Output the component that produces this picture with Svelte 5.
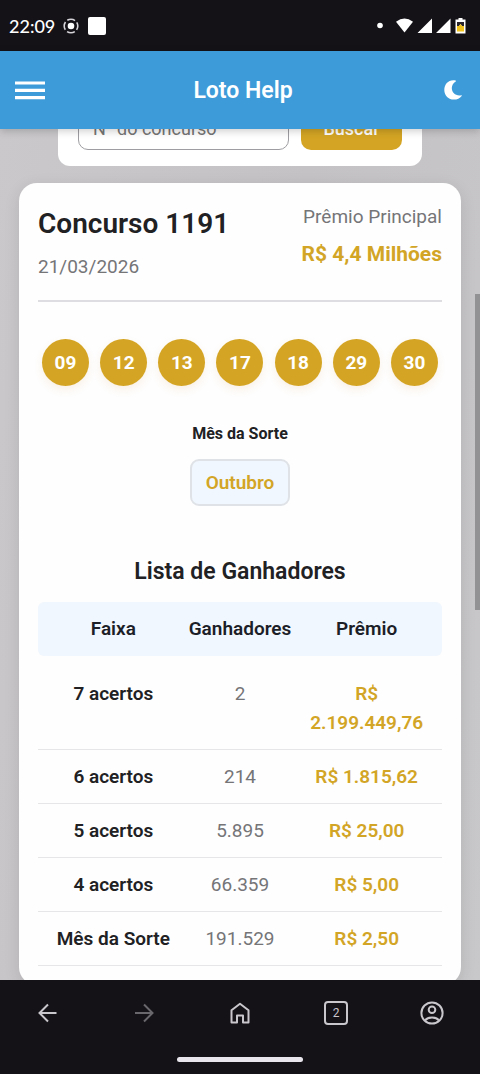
<script>
  const balls = ['09', '12', '13', '17', '18', '29', '30'];
  const tiers = [
    ['7 acertos', '2', 'R$ 2.199.449,76'],
    ['6 acertos', '214', 'R$ 1.815,62'],
    ['5 acertos', '5.895', 'R$ 25,00'],
    ['4 acertos', '66.359', 'R$ 5,00'],
    ['Mês da Sorte', '191.529', 'R$ 2,50']
  ];
</script>

<div class="phone">
  <div class="status">
    <span class="clock">22:09</span>
    <svg width="16" height="16" viewBox="0 0 16 16" aria-hidden="true">
      <circle cx="8" cy="8" r="6.8" fill="none" stroke="#d6d4d8" stroke-width="1.6" stroke-dasharray="8.2 2.48" stroke-dashoffset="4.1" />
      <circle cx="8" cy="8" r="3.3" fill="#fff" />
    </svg>
    <span class="square"></span>
    <svg class="signals" width="90" height="18" viewBox="0 0 90 18" aria-hidden="true">
      <circle cx="3" cy="8.5" r="2.8" fill="#fff" />
      <path d="M19 4.800Q27.500-1.800 36 4.800L27.500 15.500Z" fill="#fff" />
      <path d="M40.500 16H55V1.500ZM59 16H73.500V1.500Z" fill="#fff" />
      <path d="M81.500 1h4v1.500h3V16.500h-10V2.500h3Z" fill="#fff" />
      <path d="M80 5h7v4h-2l-1.500-2L82 9h-2Z" fill="#29252b" />
      <path d="M80 9h2l1.500-2L85 9h2v5.500h-7Z" fill="#f2c31c" />
    </svg>
  </div>

  <header>
    <button class="icon" aria-label="Menu">
      <svg width="30" height="20" viewBox="0 0 30 20"><path d="M0 3H30M0 10.300H30M0 17.600H30" stroke="#fff" stroke-width="3.2" /></svg>
    </button>
    <h1>Loto Help</h1>
    <button class="icon" aria-label="Modo escuro">
      <svg width="18" height="20" viewBox="0 0 18 20"><path d="M11.500.5C4.800-.8.300 4 .300 10c0 5.600 4.300 9.600 9.600 9.600 3.200 0 6-1.300 7.800-3.700.2-.4 0-.8-.5-.7C11.800 16.200 7.800 12.800 7.800 8c0-2.700 1.500-5.200 3.900-6.600.5-.3.400-.8-.2-.9Z" fill="#fff" /></svg>
    </button>
  </header>

  <main>
    <form class="search">
      <input type="text" placeholder="N° do concurso" aria-label="N° do concurso" />
      <button type="button">Buscar</button>
    </form>

    <article class="card">
      <div class="summary">
        <div>
          <h2>Concurso 1191</h2>
          <time datetime="2026-03-21">21/03/2026</time>
        </div>
        <div class="main-prize">
          <span>Prêmio Principal</span>
          <strong>R$ 4,4 Milhões</strong>
        </div>
      </div>
      <div class="balls">
        {#each balls as ball}<span>{ball}</span>{/each}
      </div>
      <div class="month">
        <h4>Mês da Sorte</h4>
        <span>Outubro</span>
      </div>
      <h3>Lista de Ganhadores</h3>
      <table>
        <thead>
          <tr><th>Faixa</th><th>Ganhadores</th><th>Prêmio</th></tr>
        </thead>
        <tbody>
          {#each tiers as [tier, winners, prize]}
            <tr><th scope="row">{tier}</th><td>{winners}</td><td class="prize">{prize}</td></tr>
          {/each}
        </tbody>
      </table>
    </article>
    <div class="thumb"></div>
  </main>

  <nav>
    <div class="tools">
      <button aria-label="Voltar">
        <svg width="28" height="28" viewBox="0 0 28 28"><path d="M22.500 14H5.500M14 5.500L5.500 14L14 22.500" /></svg>
      </button>
      <button class="dim" aria-label="Avançar">
        <svg width="28" height="28" viewBox="0 0 28 28"><path d="M5 14H22.500M14 5.500L22.500 14L14 22.500" /></svg>
      </button>
      <button aria-label="Início">
        <svg width="28" height="28" viewBox="0 0 28 28"><path d="M5.500 11.200L14 4.800L22.500 11.200V23.500H17V16.500H11V23.500H5.500Z" stroke-linejoin="round" /></svg>
      </button>
      <button aria-label="Abas"><span class="tabs">2</span></button>
      <button aria-label="Perfil">
        <svg width="28" height="28" viewBox="0 0 28 28"><circle cx="14" cy="14" r="10.600" /><circle cx="14" cy="10.800" r="3.300" /><path d="M7 21.500C10 17.600 18 17.600 21 21.500" /></svg>
      </button>
    </div>
    <div class="handle"></div>
  </nav>
</div>

<style>
  :global(body) { margin: 0; background: #141117; }
  .phone {
    display: flex;
    flex-direction: column;
    height: 100vh;
    overflow: hidden;
    font-family: Roboto, sans-serif;
    color: #212124;
  }
  .phone * { box-sizing: border-box; }
  button { border: 0; background: none; padding: 0; font: inherit; }
  svg { display: block; }
  h1, h2, h3, h4 { margin: 0; }

  .status {
    flex: none;
    display: flex;
    align-items: center;
    gap: 8px;
    height: 51px;
    padding: 0 13px 0 9px;
    background: #141117;
    color: #fff;
  }
  .clock { font: 500 18px Lato, sans-serif; }
  .square { width: 18px; height: 18px; margin-left: 1px; border-radius: 2px; background: #fff; }
  .signals { margin-left: auto; }

  header {
    position: relative;
    z-index: 1;
    flex: none;
    display: flex;
    align-items: center;
    justify-content: space-between;
    height: 78px;
    padding: 0 15px;
    background: #3d9bd9;
    box-shadow: 0 2px 8px rgba(0, 0, 0, 0.2);
  }
  .icon { display: flex; width: 30px; }
  .icon:last-child { justify-content: center; width: 24px; }
  h1 { color: #fff; font-size: 23px; font-weight: 600; }

  main {
    position: relative;
    flex: 1;
    min-height: 0;
    overflow: hidden;
    padding: 0 19px;
    background: linear-gradient(100deg, #cac8cb, #c4c2c5 50%, #c8c7c9);
  }
  .search {
    display: flex;
    gap: 12px;
    margin: -43px 39px 17px;
    padding: 20px 20px 16px;
    border-radius: 12px;
    background: #fff;
  }
  .search input {
    flex: 1;
    min-width: 0;
    height: 44px;
    padding: 0 14px;
    border: 1px solid #9d9da2;
    border-radius: 10px;
    background: #fff;
    font: 18px Roboto, sans-serif;
  }
  .search input::placeholder { color: #757575; opacity: 1; }
  .search button {
    width: 101px;
    height: 44px;
    border-radius: 10px;
    background: #d4a524;
    color: #fff;
    font-size: 18px;
    font-weight: 500;
  }

  .card {
    padding: 19px;
    border-radius: 18px;
    background: #fefefe;
    box-shadow: 0 4px 16px rgba(0, 0, 0, 0.1);
  }
  .summary {
    display: flex;
    justify-content: space-between;
    padding-bottom: 19px;
    border-bottom: 2px solid #dedde1;
  }
  h2 { font-size: 28px; line-height: 44px; font-weight: 600; }
  time { display: block; margin-top: 6px; color: #757578; font-size: 19px; line-height: 29px; }
  .main-prize { display: flex; flex-direction: column; align-items: flex-end; gap: 6px; color: #757578; }
  .main-prize span { font-size: 19px; line-height: 29px; }
  .main-prize strong { color: #d3a526; font-size: 21px; line-height: 34px; font-weight: 700; }

  .balls { display: flex; justify-content: space-between; margin-top: 37px; padding: 0 4px; }
  .balls span {
    flex: none;
    width: 47px;
    height: 47px;
    border-radius: 50%;
    background: #d4a524;
    box-shadow: 0 4px 8px rgba(212, 140, 60, 0.12);
    color: #fff;
    font-size: 19px;
    line-height: 47px;
    font-weight: 700;
    text-align: center;
  }
  .month { display: flex; flex-direction: column; align-items: center; gap: 12px; margin-top: 35px; }
  h4 { font-size: 16px; line-height: 26px; font-weight: 700; }
  .month span {
    padding: 7px 14px;
    border: 2px solid #dfe3e8;
    border-radius: 9px;
    background: #f1f7fe;
    color: #d3a526;
    font-size: 19px;
    line-height: 29px;
    font-weight: 600;
  }
  h3 { margin: 49px 0 13px; font-size: 23px; line-height: 34px; font-weight: 600; text-align: center; }

  table { display: block; font-size: 19px; line-height: 29px; text-align: center; }
  thead, tbody { display: block; }
  tr { display: grid; grid-template-columns: repeat(3, 1fr); padding: 12px; }
  th, td { padding: 0; }
  th { font-weight: 600; }
  td { color: #757578; }
  thead { margin-bottom: 11px; }
  thead tr { padding-bottom: 13px; border-radius: 6px; background: #f1f7fe; }
  thead th { color: #1c1e28; }
  tbody tr { border-bottom: 1px solid #e6e6e9; }
  .prize { color: #d3a526; font-weight: 600; }

  .thumb {
    position: absolute;
    top: 165px;
    right: 0;
    width: 5px;
    height: 316px;
    background: #929194;
  }

  nav {
    flex: none;
    display: flex;
    flex-direction: column;
    align-items: center;
    height: 94px;
    padding-top: 12px;
    background: #141117;
  }
  .tools { display: flex; width: 100%; }
  .tools button { flex: 1; display: grid; place-items: center; height: 42px; }
  .tools svg { fill: none; stroke: #c9c6cc; stroke-width: 2; }
  .tools .dim svg { stroke: #69666c; }
  .tabs {
    width: 24px;
    height: 24px;
    border: 2px solid #c9c6cc;
    border-radius: 4px;
    color: #c9c6cc;
    font-size: 12px;
    line-height: 20px;
    text-align: center;
  }
  .handle { width: 126px; height: 5px; margin-top: 23px; border-radius: 3px; background: #e9e5ec; }
</style>
